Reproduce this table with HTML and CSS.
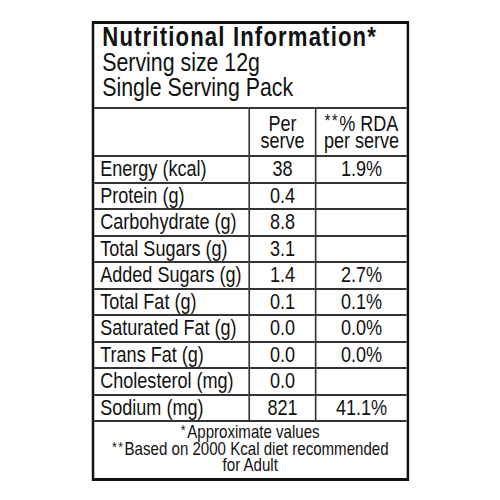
FILE: index.html
```html
<!DOCTYPE html>
<html lang="en">
<head>
    <meta charset="UTF-8">
    <meta name="viewport" content="width=device-width, initial-scale=1.0">
    <title>Nutritional Information</title>
    <link rel="stylesheet" href="styles.css">
</head>
<body>
    <div class="label">
        <div class="label-head">
            <h1>Nutritional Information*</h1>
            <p>Serving size 12g</p>
            <p>Single Serving Pack</p>
        </div>

        <table class="facts">
            <colgroup>
                <col class="col-name">
                <col class="col-serve">
                <col class="col-rda">
            </colgroup>
            <thead>
                <tr>
                    <th></th>
                    <th>Per<br>serve</th>
                    <th><span class="stars">**</span>% RDA<br>per serve</th>
                </tr>
            </thead>
            <tbody>
                <tr><td>Energy (kcal)</td><td>38</td><td>1.9%</td></tr>
                <tr><td>Protein (g)</td><td>0.4</td><td></td></tr>
                <tr><td>Carbohydrate (g)</td><td>8.8</td><td></td></tr>
                <tr><td>Total Sugars (g)</td><td>3.1</td><td></td></tr>
                <tr><td>Added Sugars (g)</td><td>1.4</td><td>2.7%</td></tr>
                <tr><td>Total Fat (g)</td><td>0.1</td><td>0.1%</td></tr>
                <tr><td>Saturated Fat (g)</td><td>0.0</td><td>0.0%</td></tr>
                <tr><td>Trans Fat (g)</td><td>0.0</td><td>0.0%</td></tr>
                <tr><td>Cholesterol (mg)</td><td>0.0</td><td></td></tr>
                <tr><td>Sodium (mg)</td><td>821</td><td>41.1%</td></tr>
            </tbody>
        </table>

        <div class="label-foot">
            <p><span class="stars">*</span>Approximate values</p>
            <p><span class="stars">**</span>Based on 2000 Kcal diet recommended<br>for Adult</p>
        </div>
    </div>
</body>
</html>
```

FILE: styles.css
```css
body {
    margin: 0;
    padding: 0;
    background-color: #fff;
    color: #111;
    font-family: "Liberation Sans", Arial, sans-serif;
}

/* o rotulo usa fonte condensada: Arial comprimida em 82% na horizontal */
.label {
    width: 380.5px;
    margin: 21px auto 0;
    border-style: solid;
    border-color: #111;
    border-width: 3px 3.66px;
    transform: scaleX(0.82);
    transform-origin: top center;
}

/* bloco do titulo */
.label-head {
    padding: 1px 0 7px 9.8px;
}

.label-head h1 {
    margin: 0;
    font-size: 27px;
    line-height: 25px;
    font-weight: bold;
    letter-spacing: 1.4px;
}

.label-head p {
    margin: 0;
    font-size: 26px;
    line-height: 25px;
}

/* tabela */
.facts {
    width: 100%;
    table-layout: fixed;
    border-collapse: separate;
    border-spacing: 0;
    font-size: 22px;
}

.col-name {
    width: 187.8px;
}

.col-serve {
    width: 81.7px;
}

.facts th,
.facts td {
    padding: 0;
    border-top: 2px solid #333;
    text-align: center;
    font-weight: normal;
}

.facts th + th,
.facts td + td {
    border-left: 2.44px solid #333;
}

.facts th {
    height: 46px;
    line-height: 17px;
    vertical-align: middle;
}

.facts td {
    height: 24.5px;
    line-height: 24.5px;
}

.facts td:first-child {
    text-align: left;
    padding-left: 7.3px;
    white-space: nowrap;
}

.stars {
    font-size: 0.8em;
    line-height: 0;
    letter-spacing: 2px;
    vertical-align: 0.2em;
}

/* rodape */
.label-foot {
    border-top: 2px solid #333;
    padding: 2px 0 4px;
    text-align: center;
    font-size: 18.4px;
    line-height: 16.5px;
}

.label-foot p {
    margin: 0;
}
```
